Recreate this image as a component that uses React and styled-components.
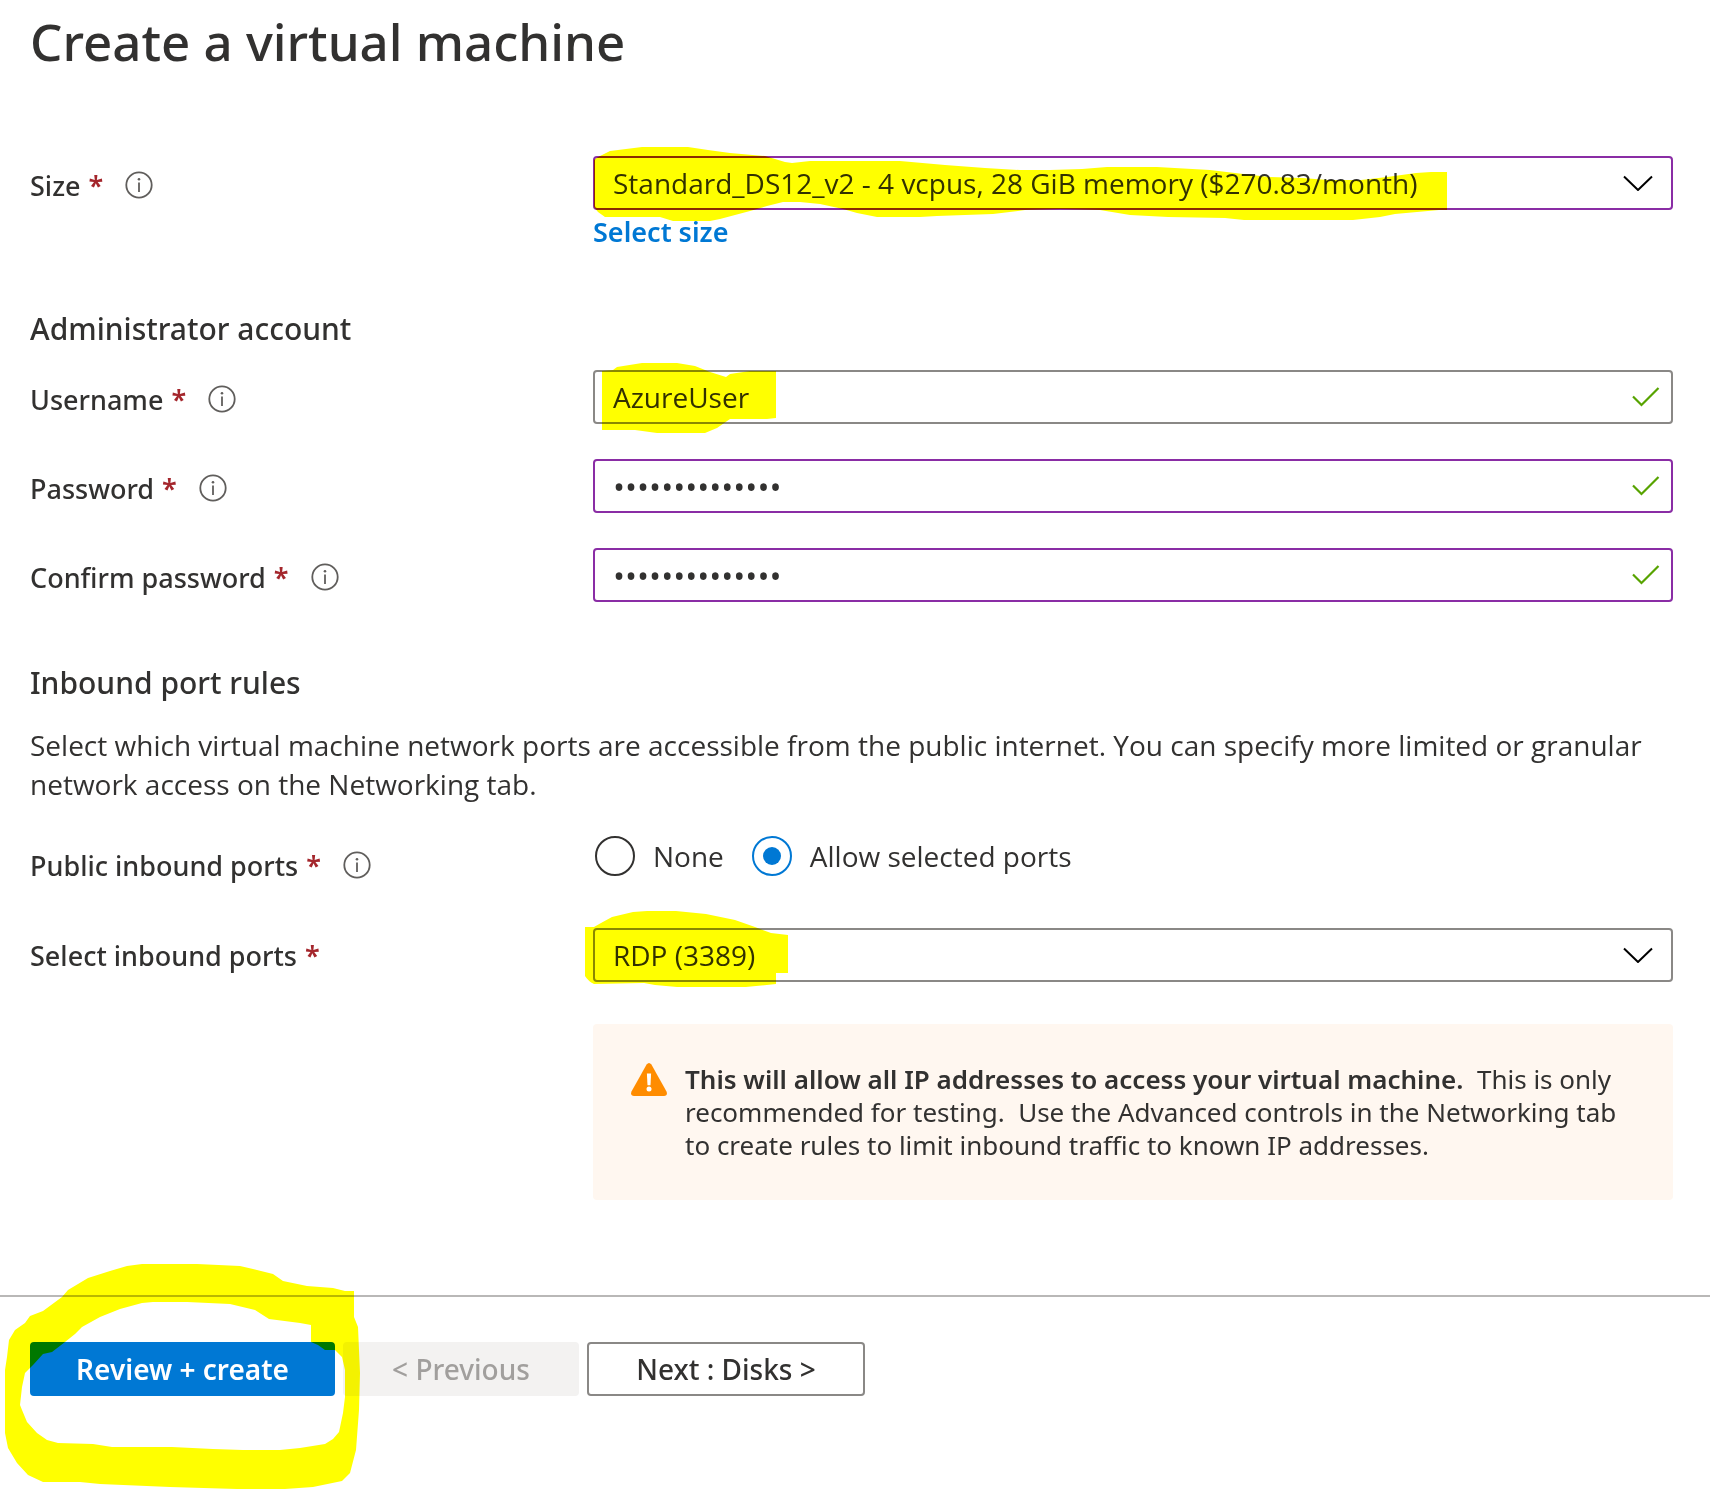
import React, { useState } from 'react';
import styled, { createGlobalStyle, css } from 'styled-components';

const color = {
  text: '#323130',
  blue: '#0078d4',
  purple: '#8a2da5',
  grey: '#8a8886',
  red: '#a4262c',
  green: '#57a300',
};

const GlobalStyle = createGlobalStyle`
  *, *::before, *::after { box-sizing: border-box; }
  body {
    margin: 0;
    background: #fff;
    color: ${color.text};
    font-family: "Noto Sans", "Open Sans", sans-serif;
    overflow-x: hidden;
  }
`;

const regularText = css`
  font-family: "Open Sans", "Noto Sans", sans-serif;
  font-size: 28px;
  font-weight: 400;
`;

const Content = styled.main`
  padding: 10px 37px 95px 30px;
`;

const Title = styled.h1`
  margin: 0 0 84px;
  font-size: 51px;
  line-height: 62px;
  font-weight: 500;
`;

const Section = styled.section`
  margin-top: ${(p) => p.$space || 0}px;
`;

const Heading = styled.h2`
  margin: 0 0 ${(p) => p.$after}px;
  font-size: 30px;
  line-height: 42px;
  font-weight: 500;
`;

const Description = styled.p`
  ${regularText}
  margin: 0 0 32px;
  line-height: 39px;
`;

const Rows = styled.div`
  display: flex;
  flex-direction: column;
  gap: ${(p) => p.$gap || 0}px;
`;

const Row = styled.div`
  display: grid;
  grid-template-columns: 563px minmax(0, 1fr);
  align-items: start;
`;

const LabelCell = styled.div`
  display: flex;
  align-items: center;
  height: 54px;
  padding-top: ${(p) => (p.$flush ? 0 : 4)}px;
  font-size: 27px;
  font-weight: 500;
`;

const Required = styled.span`
  margin-left: 8px;
  color: ${color.red};
  font-weight: 600;
`;

const InfoButton = styled.button`
  display: flex;
  margin: 0 0 0 22px;
  padding: 0;
  border: 0;
  background: none;
`;

const Field = styled.div`
  position: relative;
  display: grid;
  grid-template-areas: "control";
  align-items: center;

  > * { grid-area: control; }
`;

const control = css`
  width: 100%;
  height: 54px;
  margin: 0;
  padding: 0 60px 0 18px;
  border: 2px solid ${(p) => (p.$changed ? color.purple : color.grey)};
  border-radius: 4px;
  outline: 0;
  background: #fff;
  color: ${color.text};
  appearance: none;
`;

const TextInput = styled.input`
  ${regularText}
  ${control}
  &[type='password'] { font-size: 32px; }
`;

const Select = styled.select`
  ${regularText}
  ${control}
`;

const Adornment = styled.svg`
  justify-self: end;
  margin-right: ${(p) => p.$inset}px;
  pointer-events: none;
`;

const Highlight = styled.svg`
  position: absolute;
  top: 0;
  left: 0;
  overflow: visible;
  pointer-events: none;
  mix-blend-mode: multiply;
  fill: #ff0;
`;

const TextLink = styled.a`
  display: inline-block;
  color: ${color.blue};
  font-size: 27px;
  line-height: 44px;
  font-weight: 600;
  text-decoration: none;
`;

const RadioGroup = styled.div`
  display: flex;
  gap: 28px;
  padding-left: 2px;
`;

const RadioLabel = styled.label`
  ${regularText}
  display: flex;
  align-items: center;
  gap: 18px;
  height: 40px;
`;

const Radio = styled.input`
  appearance: none;
  width: 40px;
  height: 40px;
  margin: 0;
  padding: 9px;
  border: 2px solid ${color.text};
  border-radius: 50%;
  background-clip: content-box;

  &:checked {
    border-color: ${color.blue};
    background-color: ${color.blue};
  }
`;

const Warning = styled.div`
  display: flex;
  gap: 18px;
  margin: 42px 0 0 563px;
  padding: 39px 36px 38px 38px;
  border-radius: 4px;
  background: #fff7f0;

  svg { flex: none; }
`;

const WarningText = styled.p`
  margin: 0;
  font-size: 26px;
  line-height: 33px;

  strong { font-weight: 600; }
`;

const Footer = styled.footer`
  position: relative;
  display: flex;
  gap: 8px;
  padding: 45px 30px 93px;
  border-top: 2px solid #b9b8b7;
`;

const Button = styled.button`
  min-width: ${(p) => p.$width}px;
  height: 54px;
  padding: 0;
  border: 2px solid ${color.grey};
  border-radius: 4px;
  background: #fff;
  color: ${color.text};
  font: 500 28px "Noto Sans", "Open Sans", sans-serif;

  &:disabled {
    border-color: #f3f2f1;
    background: #f3f2f1;
    color: #a19f9d;
  }
`;

const PrimaryButton = styled(Button)`
  border-color: ${color.blue};
  background: ${color.blue};
  color: #fff;
  font-weight: 600;
`;

function InfoIcon() {
  return (
    <svg width="28" height="28" viewBox="0 0 28 28" aria-hidden="true">
      <circle cx="14" cy="14" r="12.7" fill="none" stroke="#605e5c" strokeWidth="1.8" />
      <circle cx="14" cy="8.3" r="1.3" fill="#605e5c" />
      <path d="M14 11.5V21" stroke="#605e5c" strokeWidth="1.8" />
    </svg>
  );
}

function Chevron() {
  return (
    <Adornment $inset={20} width="30" height="16" viewBox="0 0 30 16" aria-hidden="true">
      <path d="M1 1.5L15 15L29 1.5" fill="none" stroke="#000" strokeWidth="2" />
    </Adornment>
  );
}

function Check() {
  return (
    <Adornment $inset={13} width="28" height="20" viewBox="0 0 28 20" aria-hidden="true">
      <path d="M1 9.5L9.5 18L26.5 1" fill="none" stroke={color.green} strokeWidth="2.2" />
    </Adornment>
  );
}

function WarningIcon() {
  return (
    <svg width="36" height="33" viewBox="0 0 36 33" aria-hidden="true">
      <path d="M15.6 1.5Q18-1.5 20.4 1.5L35.5 28.5Q37 32.5 33 33H3Q-1 32.500 .5 28.5Z" fill="#ff8c00" />
      <path d="M15.9 10.5H20.1L19.5 22.3H16.5Z" fill="#fff" />
      <circle cx="18" cy="26" r="2.5" fill="#fff" />
    </svg>
  );
}

function Label({ htmlFor, id, info = true, flush, children }) {
  return (
    <LabelCell $flush={flush}>
      {htmlFor ? <label htmlFor={htmlFor}>{children}</label> : <span id={id}>{children}</span>}
      <Required aria-hidden="true">*</Required>
      {info && (
        <InfoButton type="button" aria-label={`About ${children}`}>
          <InfoIcon />
        </InfoButton>
      )}
    </LabelCell>
  );
}

export default function App() {
  const [username, setUsername] = useState('AzureUser');
  const [password, setPassword] = useState('Passw0rd123456');
  const [confirm, setConfirm] = useState('Passw0rd123456');
  const [ports, setPorts] = useState('selected');

  return (
    <>
      <GlobalStyle />
      <Content>
        <Title>Create a virtual machine</Title>

        <Section>
          <Row>
            <Label htmlFor="size">Size</Label>
            <div>
              <Field>
                <Select id="size" $changed>
                  <option>Standard_DS12_v2 - 4 vcpus, 28 GiB memory ($270.83/month)</option>
                </Select>
                <Chevron />
                <Highlight width="860" height="54" viewBox="593 156 860 54" aria-hidden="true">
                  <path d="M594 160L598 157L610 151L642 147H688L708 150L730 153L765 156L785 162L792 163L810 161H900L945 165L985 168L1020 170H1050L1082 169L1107 167H1157L1210 170L1235 173L1269 177L1302 178L1328 180H1361L1387 177L1416 173L1431 172H1447V210H1439L1395 214L1380 217L1353 220H1244L1225 218L1168 217L1130 215L1100 210L1060 209L1025 210L993 214L937 216L920 217H877L857 213L843 209L820 204L800 202H783L767 206L750 211L720 219L710 221H673L660 217H605L598 212L594 207Z" />
                </Highlight>
              </Field>
              <TextLink href="#size">Select size</TextLink>
            </div>
          </Row>
        </Section>

        <Section $space={54}>
          <Heading $after={20}>Administrator account</Heading>
          <Rows $gap={35}>
            <Row>
              <Label htmlFor="username">Username</Label>
              <Field>
                <TextInput id="username" value={username} onChange={(e) => setUsername(e.target.value)} />
                <Check />
                <Highlight width="180" height="54" viewBox="593 370 180 54" aria-hidden="true">
                  <path d="M602 371L613 370L617 367L642 363H677L695 366L710 372L726 377L730 374L750 371H776V418L767 419H730L717 428L705 433H657L635 430H602Z" />
                </Highlight>
              </Field>
            </Row>
            <Row>
              <Label htmlFor="password">Password</Label>
              <Field>
                <TextInput id="password" type="password" $changed value={password} onChange={(e) => setPassword(e.target.value)} />
                <Check />
              </Field>
            </Row>
            <Row>
              <Label htmlFor="confirm">Confirm password</Label>
              <Field>
                <TextInput id="confirm" type="password" $changed value={confirm} onChange={(e) => setConfirm(e.target.value)} />
                <Check />
              </Field>
            </Row>
          </Rows>
        </Section>

        <Section $space={60}>
          <Heading $after={22}>Inbound port rules</Heading>
          <Description>
            Select which virtual machine network ports are accessible from the public internet. You can specify more
            limited or granular network access on the Networking tab.
          </Description>
          <Rows $gap={38}>
            <Row>
              <Label id="public-ports">Public inbound ports</Label>
              <RadioGroup role="radiogroup" aria-labelledby="public-ports">
                <RadioLabel>
                  <Radio type="radio" name="ports" checked={ports === 'none'} onChange={() => setPorts('none')} />
                  None
                </RadioLabel>
                <RadioLabel>
                  <Radio type="radio" name="ports" checked={ports === 'selected'} onChange={() => setPorts('selected')} />
                  Allow selected ports
                </RadioLabel>
              </RadioGroup>
            </Row>
            <Row>
              <Label htmlFor="inbound" info={false} flush>Select inbound ports</Label>
              <Field>
                <Select id="inbound">
                  <option>RDP (3389)</option>
                </Select>
                <Chevron />
                <Highlight width="200" height="54" viewBox="593 928 200 54" aria-hidden="true">
                  <path d="M585 927H594L601 923L612 917L633 912L647 911H676L706 914L735 920L755 927L771 933L788 935V973H776V984L756 986L746 987H677L655 985L644 983L594 984Q588 981 585 976Z" />
                </Highlight>
              </Field>
            </Row>
          </Rows>
          <Warning role="note">
            <WarningIcon />
            <WarningText>
              <strong>This will allow all IP addresses to access your virtual machine.</strong>
              {'\u00a0 This is only recommended for testing.\u00a0 Use the Advanced controls in the Networking tab to create rules to limit inbound traffic to known IP addresses.'}
            </WarningText>
          </Warning>
        </Section>
      </Content>

      <Footer>
        <PrimaryButton type="button" $width={305}>Review + create</PrimaryButton>
        <Button type="button" $width={236} disabled>&lt; Previous</Button>
        <Button type="button" $width={278}>Next : Disks &gt;</Button>
        <Highlight width="360" height="192" viewBox="0 1297 360 192" aria-hidden="true">
          <path
            fillRule="evenodd"
            d="M142 1264H197L240 1266L253 1269L273 1274L283 1281L307 1286L333 1288L345 1291H354V1317L358 1327L360 1373L359 1410L356 1450L350 1473L342 1481L313 1487L285 1489H237L170 1487L100 1484L80 1482H43L28 1475L17 1463L8 1448L5 1433V1370L7 1357L9 1340L15 1330L25 1323L30 1316L43 1311L62 1297L68 1290L88 1278L110 1271L127 1266Z
               M153 1302H187L230 1304L255 1310L269 1319L300 1323L311 1325V1342L318 1345L325 1350L335 1350L342 1357L345 1370V1397L343 1413L339 1432L333 1439L325 1444L300 1448L280 1450H243L213 1449L172 1447H112L93 1444L58 1443L47 1440L37 1433L27 1422L22 1410L20 1405L22 1387L25 1373L33 1365L43 1354L52 1352L65 1342L75 1334L82 1327L100 1317L120 1309L142 1303Z"
          />
        </Highlight>
      </Footer>
    </>
  );
}
